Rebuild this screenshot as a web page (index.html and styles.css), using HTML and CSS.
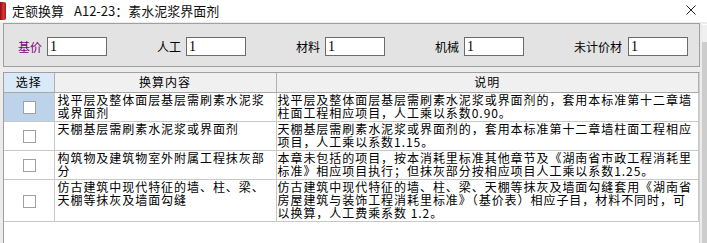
FILE: index.html
```html
<!DOCTYPE html>
<html lang="zh-CN">
<head>
	<meta charset="UTF-8">
	<title>定额换算</title>
	<link rel="stylesheet" href="styles.css">
</head>
<body>
	<div class="titlebar">
		<span class="app-icon"></span>
		<span class="title">定额换算</span>
		<span class="title code">A12-23：素水泥浆界面剂</span>
		<svg class="close" width="10" height="10" viewBox="0 0 10 10">
			<path d="M0.5 0.5 L9.5 9.5 M9.5 0.5 L0.5 9.5" stroke="#222" stroke-width="1" fill="none"/>
		</svg>
	</div>

	<div class="main">
		<div class="content">
			<div class="factors">
				<label class="factor first"><span class="name base">基价</span><input type="text" value="1"></label>
				<label class="factor"><span class="name">人工</span><input type="text" value="1"></label>
				<label class="factor"><span class="name">材料</span><input type="text" value="1"></label>
				<label class="factor"><span class="name">机械</span><input type="text" value="1"></label>
				<label class="factor last"><span class="name">未计价材</span><input type="text" value="1"></label>
			</div>

			<div class="grid">
				<table>
					<colgroup>
						<col class="c-pick">
						<col class="c-item">
						<col>
					</colgroup>
					<thead>
						<tr>
							<th class="pick">选择</th>
							<th>换算内容</th>
							<th>说明</th>
						</tr>
					</thead>
					<tbody>
						<tr class="current">
							<td class="pick"><span class="box"></span></td>
							<td class="item">找平层及整体面层基层需刷素水泥浆或界面剂</td>
							<td class="note">找平层及整体面层基层需刷素水泥浆或界面剂的，套用本标准第十二章墙柱面工程相应项目，人工乘以系数0.90。</td>
						</tr>
						<tr>
							<td class="pick"><span class="box"></span></td>
							<td class="item">天棚基层需刷素水泥浆或界面剂</td>
							<td class="note">天棚基层需刷素水泥浆或界面剂的，套用本标准第十二章墙柱面工程相应项目，人工乘以系数1.15。</td>
						</tr>
						<tr>
							<td class="pick"><span class="box"></span></td>
							<td class="item">构筑物及建筑物室外附属工程抹灰部分</td>
							<td class="note">本章未包括的项目，按本消耗里标准其他章节及《湖南省市政工程消耗里标准》相应项目执行；但抹灰部分按相应项目人工乘以系数1.25。</td>
						</tr>
						<tr>
							<td class="pick"><span class="box"></span></td>
							<td class="item">仿古建筑中现代特征的墙、柱、梁、天棚等抹灰及墙面勾缝</td>
							<td class="note">仿古建筑中现代特征的墙、柱、梁、天棚等抹灰及墙面勾缝套用《湖南省房屋建筑与装饰工程消耗里标准》（基价表）相应子目，材料不同时，可以换算，人工费乘系数 1.2。</td>
						</tr>
					</tbody>
				</table>
			</div>
		</div>
		<div class="vscroll"><div class="thumb"></div></div>
	</div>
</body>
</html>
```

FILE: styles.css
```css
*{
	margin: 0;
	padding: 0;
	box-sizing: border-box;
}
html, body{
	width: 707px;
	height: 243px;
	overflow: hidden;
}
body{
	font: 12px "Noto Sans CJK SC", "Noto Sans", sans-serif;
	color: #000;
	background: #ececec;
	display: flex;
	flex-direction: column;
}

/* title bar */
.titlebar{
	height: 22px;
	background: #fff;
	display: flex;
	align-items: center;
	position: relative;
}
.app-icon{
	width: 6px;
	height: 18px;
	margin-right: 6px;
	background: linear-gradient(90deg, #8e0b10, #d8383a 60%, #a81418);
	border-radius: 0 2px 2px 0;
}
.title{
	font-size: 13px;
	line-height: 16px;
	color: #111;
}
.title.code{
	margin-left: 10px;
}
.close{
	position: absolute;
	right: 11px;
	top: 5px;
}

/* main area */
.main{
	flex: 1;
	display: flex;
	padding-left: 3px;
	min-height: 0;
}
.content{
	width: 697px;
	display: flex;
	flex-direction: column;
	padding-top: 1px;
}
.vscroll{
	width: 5px;
	margin-left: 2px;
	margin-top: 2px;
	background: #f0f0f0;
	display: flex;
	flex-direction: column;
	justify-content: flex-end;
	border-top: 1px solid #fff;
}
.vscroll .thumb{
	height: 201px;
	background: #cdcdcd;
}

/* factor inputs */
.factors{
	height: 44px;
	border: 1px solid #a0a0a0;
	background: #e3e3e3;
	display: flex;
	align-items: center;
	padding-top: 3px;
}
.factor{
	width: 139px;
	display: flex;
	justify-content: flex-end;
	align-items: center;
	gap: 5px;
}
.factor.first{
	width: 103px;
}
.factor.last{
	width: 164px;
	gap: 6px;
}
.name{
	font-size: 12px;
	line-height: 14px;
}
.name.base{
	color: #800080;
}
.factor input{
	width: 60px;
	height: 19px;
	border: 1px solid #6c6c6c;
	background: #fff;
	padding: 0 2px;
	font: 14px "Liberation Serif", serif;
	color: #000;
	outline: none;
}

/* grid */
.grid{
	flex: 1;
	margin-top: 5px;
	background: #fff;
	border-left: 1px solid #a0a0a0;
	border-top: 1px solid #a0a0a0;
	border-right: 1px solid #d0d0d0;
}
.grid table{
	width: 100%;
	border-collapse: collapse;
	table-layout: fixed;
	letter-spacing: 0.95px;
}
.c-pick{
	width: 50px;
}
.c-item{
	width: 222px;
}
th{
	height: 19px;
	font-weight: normal;
	line-height: 18px;
	background: #f0f0f0;
	border-right: 1px solid #b0b0b0;
	border-bottom: 1px solid #a8a8a8;
	text-align: center;
}
th.pick{
	background: #d9e9f8;
}
td{
	border-right: 1px solid #c8c8c8;
	border-bottom: 1px solid #c8c8c8;
	vertical-align: top;
	line-height: 13px;
	padding: 0 2px 2px 3px;
	line-break: anywhere;
	word-break: break-all;
}
td.note{
	padding: 0 0 2px 1px;
}
td.pick{
	vertical-align: middle;
	text-align: center;
	padding: 0;
}
tr.current td.pick{
	background: #bcd3ea;
}
.box{
	display: inline-block;
	width: 13px;
	height: 13px;
	border: 1px solid #a0a0a0;
	background: #fff;
	vertical-align: middle;
	margin-left: 2px;
}
```
